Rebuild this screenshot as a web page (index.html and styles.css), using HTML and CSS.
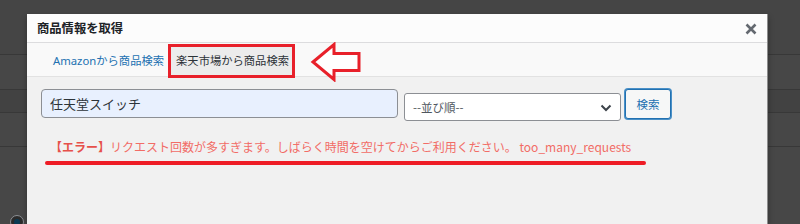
FILE: index.html
```html
<!DOCTYPE html>
<html lang="ja">
<head>
<meta charset="utf-8">
<title>商品情報を取得</title>
<link rel="stylesheet" href="styles.css">
</head>
<body>
<div class="backdrop">
  <div class="bg-row r1"></div>
  <div class="bg-row r2"></div>
  <div class="bg-row r3"></div>
  <div class="bg-row r4"></div>
  <div class="bg-row r5"><span class="radio"></span></div>
</div>

<div class="modal">
  <div class="modal-header">
    <span class="modal-title">商品情報を取得</span>
    <svg class="close" width="12" height="12" viewBox="0 0 12 12"><path d="M1.5 1.5 L10.5 10.5 M10.5 1.5 L1.5 10.5" stroke="#646970" stroke-width="2.6" stroke-linecap="butt"/></svg>
  </div>
  <div class="tabs">
    <a class="tab">Amazonから商品検索</a>
    <span class="tab active">楽天市場から商品検索</span>
  </div>
  <div class="content">
    <div class="search-row">
      <div class="text-input">任天堂スイッチ</div>
      <div class="select">
        <span>--並び順--</span>
        <svg class="chev" width="12" height="8" viewBox="0 0 12 8"><path d="M1.5 1.5 L6 6 L10.5 1.5" fill="none" stroke="#3c434a" stroke-width="2"/></svg>
      </div>
      <div class="button">検索</div>
    </div>
    <p class="error"><b>【エラー】</b>リクエスト回数が多すぎます。しばらく時間を空けてからご利用ください。 too_many_requests</p>
    <div class="underline"></div>
  </div>
  <svg class="arrow" width="54" height="40" viewBox="0 0 54 40"><path d="M3 20 L24 2.5 L24 11.5 L49 11.5 L49 28.5 L24 28.5 L24 37.5 Z" fill="#fff" stroke="#e8202a" stroke-width="3" stroke-linejoin="miter"/></svg>
</div>
</body>
</html>
```
FILE: styles.css
```css
html, body {
  margin: 0;
  padding: 0;
  width: 800px;
  height: 224px;
  overflow: hidden;
  background: #464646;
  font-family: "Noto Sans", "Noto Sans CJK JP", sans-serif;
}
.backdrop {
  display: flex;
  flex-direction: column;
}
.bg-row {
  border-bottom: 1px solid #383838;
}
.r1 { height: 54px; background: #454545; }
.r2 { height: 34px; background: #474747; }
.r3 { height: 22px; background: #424242; }
.r4 { height: 33px; background: #474747; }
.r5 { height: 77px; background: #474747; position: relative; }
.radio {
  position: absolute;
  left: 10px;
  top: 68px;
  width: 12px;
  height: 12px;
  border-radius: 50%;
  border: 1px solid #8c8f94;
  background: #2b2b2b;
}
.radio::after {
  content: "";
  position: absolute;
  left: 3px;
  top: 3px;
  width: 6px;
  height: 6px;
  border-radius: 50%;
  background: #0b3a54;
}
.modal {
  position: absolute;
  left: 27px;
  top: 14px;
  width: 740px;
  height: 210px;
  background: #f1f1f1;
  border-right: 1px solid #8d8d8d;
  box-shadow: 0 3px 6px rgba(0,0,0,0.3);
}
.modal-header {
  height: 28px;
  background: #fcfcfc;
  border-bottom: 1px solid #dcdcde;
  display: flex;
  align-items: center;
  justify-content: space-between;
  padding: 0 10px 0 10px;
}
.modal-title {
  font-family: "Noto Sans CJK JP", sans-serif;
  font-size: 12.3px;
  font-weight: 600;
  color: #1d2327;
}
.close {
  margin-top: 2px;
  margin-right: 0;
}
.tabs {
  height: 33px;
  background: #f9f9f9;
  border-bottom: 1px solid #e2e2e2;
  display: flex;
  align-items: center;
  padding-left: 26px;
  gap: 7px;
}
.tab {
  font-family: "Noto Sans", "Noto Sans CJK JP", sans-serif;
  font-size: 11.3px;
  color: #2271b1;
  white-space: nowrap;
}
.tab.active {
  color: #2c3338;
  background: #ececec;
  height: 28px;
  line-height: 28px;
  padding: 0 3px 0 5px;
  outline: 3px solid #e8202a;
  margin-top: 3px;
}
.content {
  padding: 12px 0 0 14px;
}
.search-row {
  display: flex;
  align-items: flex-start;
}
.text-input {
  box-sizing: border-box;
  width: 357px;
  height: 29px;
  background: #e8f0fe;
  border: 1px solid #8c8f94;
  border-radius: 4px;
  padding-left: 8px;
  font-family: "Noto Sans CJK JP", sans-serif;
  font-size: 13px;
  line-height: 27px;
  color: #2c3338;
}
.select {
  box-sizing: border-box;
  width: 217px;
  height: 28px;
  margin-left: 6px;
  margin-top: 4px;
  background: #fff;
  border: 1px solid #8c8f94;
  border-radius: 3px;
  display: flex;
  align-items: center;
  justify-content: space-between;
  padding: 0 8px 0 8px;
  font-family: "Noto Sans CJK JP", sans-serif;
  font-size: 11.5px;
  color: #50575e;
}
.chev { margin-top: 1px; }
.button {
  box-sizing: border-box;
  width: 46px;
  height: 30px;
  margin-left: 4px;
  border: 1px solid #2271b1;
  box-shadow: 0 0 0 1px #4a90c7;
  border-radius: 3px;
  background: #f6f7f7;
  color: #2271b1;
  font-family: "Noto Sans CJK JP", sans-serif;
  font-size: 11.5px;
  display: flex;
  align-items: center;
  justify-content: center;
}
.error {
  margin: 17px 0 0 9px;
  font-family: "Noto Sans CJK JP", sans-serif;
  font-size: 12px;
  line-height: 18px;
  color: #f26c66;
  white-space: nowrap;
}
.error b {
  color: #e6504a;
  font-weight: 700;
}
.underline {
  margin: 5px 0 0 4px;
  width: 601px;
  height: 4px;
  border-radius: 2px;
  background: #ee1c25;
}
.arrow {
  position: absolute;
  left: 283px;
  top: 28px;
}
```
